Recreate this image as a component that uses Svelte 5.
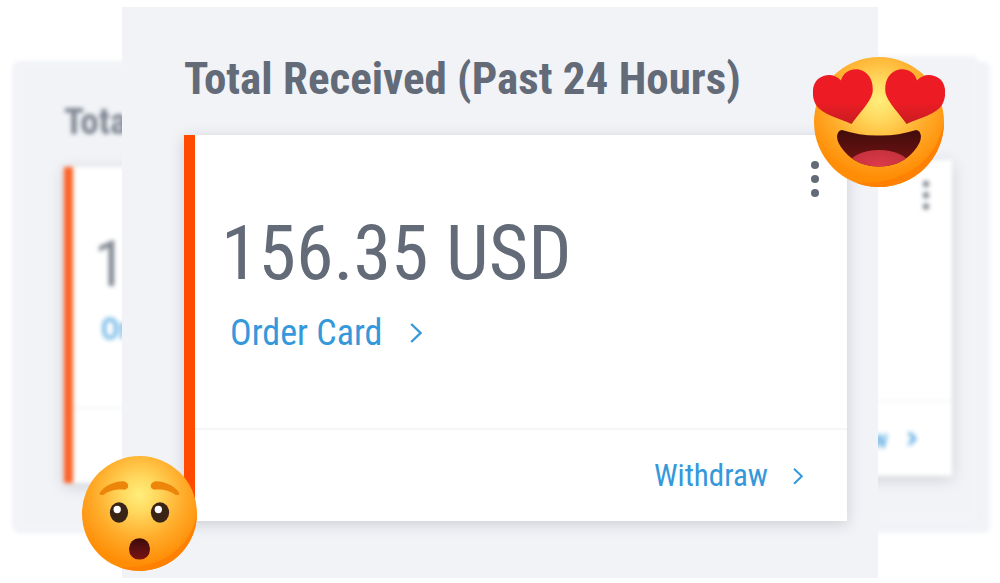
<script>
  const full = {
    title: 'Total Received (Past 24 Hours)',
    amount: '156.35 USD',
    order: 'Order Card',
    withdraw: 'Withdraw',
    menu: true
  };

  // Each card behind carries only what peeks out from under the front one.
  const leftPeek = { title: 'Tota', amount: '1', order: 'Or' };
  const rightPeek = { withdraw: 'w', menu: true };
</script>

{#snippet chevron()}
  <svg class="chevron" viewBox="0 0 12 20" aria-hidden="true">
    <path d="M1.2 1 L10.6 10 L1.2 19" />
  </svg>
{/snippet}

{#snippet summary(data)}
  <h2>{data.title}</h2>
  <article class="card">
    {#if data.menu}
      <button class="menu" type="button" aria-label="More options">
        <svg viewBox="0 0 10 38" aria-hidden="true">
          <circle cx="5" cy="5" r="4" />
          <circle cx="5" cy="19" r="4" />
          <circle cx="5" cy="33" r="4" />
        </svg>
      </button>
    {/if}
    <div class="body">
      <p class="amount">{data.amount}</p>
      <div class="order">
        {#if data.order}
          <a href="#order">{data.order} {@render chevron()}</a>
        {/if}
      </div>
    </div>
    <footer>
      {#if data.withdraw}
        <a href="#withdraw">{data.withdraw} {@render chevron()}</a>
      {/if}
    </footer>
  </article>
{/snippet}

<main>
  <div class="backdrop" aria-hidden="true"></div>
  <div class="panel ghost right" aria-hidden="true" inert>{@render summary(rightPeek)}</div>
  <div class="panel ghost left" aria-hidden="true" inert>{@render summary(leftPeek)}</div>

  <section class="panel front">
    {@render summary(full)}

    <svg class="emoji love" viewBox="0 0 132 130" role="img" aria-label="Heart eyes">
      <defs>
        <radialGradient id="love-face" cx="66" cy="43" r="78" gradientUnits="userSpaceOnUse">
          <stop offset="0" stop-color="#ffee7c" />
          <stop offset="0.25" stop-color="#ffd95f" />
          <stop offset="0.62" stop-color="#ffae2d" />
          <stop offset="1" stop-color="#ff8d06" />
        </radialGradient>
        <linearGradient id="love-mouth" x1="0" y1="0" x2="0" y2="1">
          <stop offset="0" stop-color="#3c0b0b" />
          <stop offset="1" stop-color="#7b1414" />
        </linearGradient>
        <linearGradient id="love-heart" x1="0" y1="0" x2="0" y2="1">
          <stop offset="0.6" stop-color="#ed1c24" />
          <stop offset="1" stop-color="#c91c22" />
        </linearGradient>
        <radialGradient id="love-tongue" cx="0.5" cy="0.5" r="0.6">
          <stop offset="0" stop-color="#de3a49" />
          <stop offset="1" stop-color="#c2303d" />
        </radialGradient>
        <clipPath id="love-clip">
          <path d="M29 73 Q48 79 66 78.500 Q84 79 103 73 Q107 73 108 79 Q108 86 101 94 Q88 109.500 66 109.500 Q44 109.500 31 94 Q24 86 24 79 Q25 73 29 73Z" />
        </clipPath>
      </defs>
      <circle cx="66" cy="65" r="65" fill="url(#love-face)" />
      <path d="M131 65 A65 65 0 0 1 42 125.500 C90 129 124 104 131 65Z" fill="#ff8104" />
      <path d="M38.500 67 C25 61 9 57 3 48 C-2 39 -1 27 5 22 C13 16 22 17 28 23.500 C30 15 38 11 46 12.500 C56 15 61 24 59.500 36 C57 46 46 56 38.500 67Z" fill="url(#love-heart)" />
      <path d="M93.500 67 C107 61 123 57 129 48 C134 39 133 27 127 22 C119 16 110 17 104 23.500 C102 15 94 11 86 12.500 C76 15 71 24 72.500 36 C75 46 86 56 93.500 67Z" fill="url(#love-heart)" />
      <g clip-path="url(#love-clip)">
        <rect x="20" y="70" width="92" height="42" fill="url(#love-mouth)" />
        <ellipse cx="66" cy="109" rx="31" ry="16" fill="url(#love-tongue)" />
      </g>
    </svg>

    <svg class="emoji wow" viewBox="0 0 116 116" role="img" aria-label="Surprised">
      <defs>
        <radialGradient id="wow-face" cx="58" cy="39" r="70" gradientUnits="userSpaceOnUse">
          <stop offset="0" stop-color="#ffee7c" />
          <stop offset="0.25" stop-color="#ffd95f" />
          <stop offset="0.62" stop-color="#ffae2d" />
          <stop offset="1" stop-color="#ff8d06" />
        </radialGradient>
        <linearGradient id="wow-mouth" x1="0" y1="0" x2="0" y2="1">
          <stop offset="0" stop-color="#3c0b0b" />
          <stop offset="1" stop-color="#7b1414" />
        </linearGradient>
      </defs>
      <circle cx="58" cy="58" r="58" fill="url(#wow-face)" />
      <path d="M116 58 A58 58 0 0 1 37 112 C80 115 110 92 116 58Z" fill="#ff8104" />
      <path d="M18 37 C23 29 35 25 42 25.500 C48 27 48 33 43 34 C33 33.500 28 35 22 39 C19 40 17 39 18 37Z" fill="#ed850a" />
      <path d="M98 37 C93 29 81 25 74 25.500 C68 27 68 33 73 34 C83 33.500 88 35 94 39 C97 40 99 39 98 37Z" fill="#ed850a" />
      <ellipse cx="37.300" cy="57" rx="9.200" ry="10.400" fill="#3a2416" />
      <ellipse cx="78.700" cy="57" rx="9.200" ry="10.400" fill="#3a2416" />
      <circle cx="35.500" cy="54" r="3.700" fill="#fff" />
      <circle cx="77" cy="54" r="3.700" fill="#fff" />
      <rect x="47.500" y="83" width="21" height="21.500" rx="10" fill="url(#wow-mouth)" />
    </svg>
  </section>
</main>

<style>
  :global(body) {
    margin: 0;
    background: #fff;
    font-family: 'Roboto Condensed', Roboto, 'Liberation Sans', sans-serif;
  }

  main {
    position: relative;
    padding: 7px 12% 5px;
    overflow: hidden;
  }

  .panel {
    --title: 45px;
    --title-line: 54px;
    --title-gap: 29px;
    --amount: 76px;
    --amount-line: 80px;
    --order: 36px;
    --order-line: 40px;
    --withdraw: 31px;
    --withdraw-line: 36px;
    --bar: 11px;
    --body-pad: 78px 26px 75px;
    --order-gap: 20px;
    --order-indent: 9px;
    --foot-pad: 28px 44px 27px 0;
    --link-gap: 28px;
    --foot-gap: 25px;
    --menu-top: 25px;
    --menu-right: 27px;
    --menu-width: 10px;
    --chevron: 12px;
    --chevron-small: 10px;
    box-sizing: border-box;
    padding: 45px 31px 57px 62px;
    background: #f1f3f7;
    color: #636b79;
  }

  .front {
    position: relative;
    margin: 0 2px;
  }

  .backdrop,
  .ghost {
    position: absolute;
    border-radius: 6px;
    filter: blur(2px);
  }

  .backdrop {
    inset: 62px 10px 50px 14px;
    background: #f1f3f7;
  }

  .ghost {
    --title: 37px;
    --title-line: 44px;
    --title-gap: 23px;
    --amount: 64px;
    --amount-line: 66px;
    --order: 30px;
    --order-line: 34px;
    --withdraw: 26px;
    --withdraw-line: 30px;
    --bar: 9px;
    --body-pad: 65px 21px 61px;
    --order-gap: 14px;
    --order-indent: 7px;
    --foot-pad: 22px 36px 22px 0;
    --link-gap: 23px;
    --foot-gap: 20px;
    --menu-top: 20px;
    --menu-right: 22px;
    --menu-width: 8px;
    --chevron: 10px;
    --chevron-small: 8px;
    width: 62%;
    padding: 37px 26px 47px 51px;
  }

  .ghost h2,
  .ghost .amount,
  .ghost .menu {
    opacity: 0.8;
  }

  .ghost a {
    filter: blur(1px);
  }

  .ghost .card {
    border-left-color: #ff6226;
  }

  .ghost .chevron {
    stroke-width: 4;
  }

  .left {
    top: 63px;
    left: 13px;
  }

  .right {
    top: 56px;
    right: 22px;
  }

  h2 {
    min-height: var(--title-line);
    margin: 0 0 var(--title-gap);
    font-size: var(--title);
    line-height: var(--title-line);
    font-weight: 700;
    white-space: nowrap;
  }

  .card {
    position: relative;
    border-left: var(--bar) solid #ff4a00;
    background: #fff;
    box-shadow: 0 3px 14px rgba(60, 60, 70, 0.2);
  }

  .menu {
    position: absolute;
    top: var(--menu-top);
    right: var(--menu-right);
    padding: 0;
    border: 0;
    background: none;
    color: inherit;
  }

  .menu svg {
    display: block;
    width: var(--menu-width);
    fill: currentColor;
  }

  .body {
    padding: var(--body-pad);
    border-bottom: 2px solid #f5f6f7;
  }

  .amount {
    min-height: var(--amount-line);
    margin: 0 0 var(--order-gap);
    font-size: var(--amount);
    line-height: var(--amount-line);
    white-space: nowrap;
  }

  a {
    display: flex;
    align-items: center;
    gap: var(--link-gap);
    color: #3498db;
    text-decoration: none;
  }

  .order {
    display: flex;
    min-height: var(--order-line);
    padding-left: var(--order-indent);
    font-size: var(--order);
    line-height: var(--order-line);
  }

  footer {
    display: flex;
    justify-content: flex-end;
    min-height: var(--withdraw-line);
    padding: var(--foot-pad);
    font-size: var(--withdraw);
    line-height: var(--withdraw-line);
  }

  .chevron {
    width: var(--chevron);
    fill: none;
    stroke: currentColor;
    stroke-width: 2.4;
  }

  footer a {
    gap: var(--foot-gap);
  }

  footer .chevron {
    width: var(--chevron-small);
  }

  .emoji {
    position: absolute;
    display: block;
  }

  .love {
    top: 50px;
    right: -67px;
    width: 132px;
  }

  .wow {
    bottom: 7px;
    left: -40px;
    width: 115px;
  }
</style>
